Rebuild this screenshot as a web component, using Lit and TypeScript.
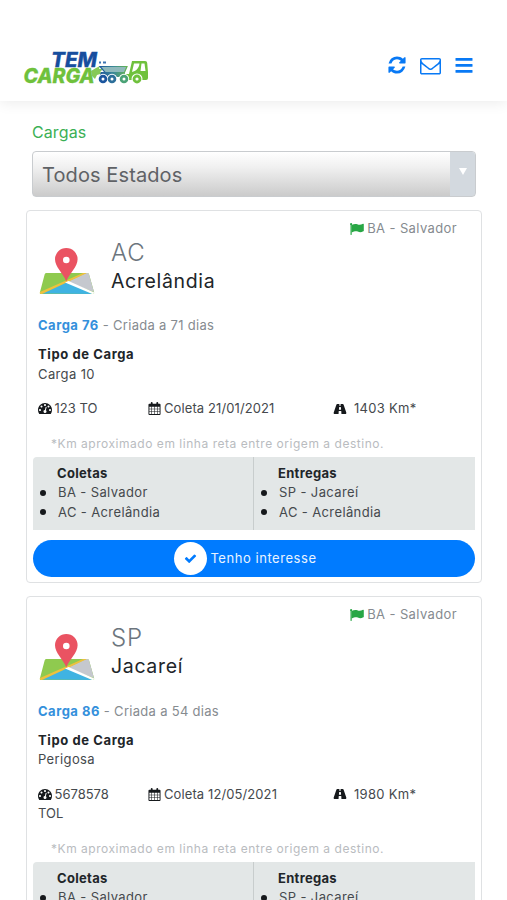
import { LitElement, html, css, svg } from "lit";
import { customElement, property } from "lit/decorators.js";

interface Carga {
  id: number;
  origem: string;
  uf: string;
  cidade: string;
  dias: number;
  tipo: string;
  peso: string;
  coleta: string;
  km: number;
  coletas: string[];
  entregas: string[];
}

const CARGAS: Carga[] = [
  {
    id: 76, origem: "BA - Salvador", uf: "AC", cidade: "Acrelândia", dias: 71,
    tipo: "Carga 10", peso: "123 TO", coleta: "21/01/2021", km: 1403,
    coletas: ["BA - Salvador", "AC - Acrelândia"],
    entregas: ["SP - Jacareí", "AC - Acrelândia"],
  },
  {
    id: 86, origem: "BA - Salvador", uf: "SP", cidade: "Jacareí", dias: 54,
    tipo: "Perigosa", peso: "5678578 TOL", coleta: "12/05/2021", km: 1980,
    coletas: ["BA - Salvador"],
    entregas: ["SP - Jacareí"],
  },
];

const shapes = {
  refresh: { box: "0 0 1536 1792", body: svg`<path d="M1511 1056q0 5-1 7-64 268-268 434.500t-478 166.500q-146 0-282.500-55t-243.500-157l-129 129q-19 19-45 19t-45-19-19-45v-448q0-26 19-45t45-19h448q26 0 45 19t19 45-19 45l-137 137q71 66 161 102t187 36q134 0 250-65t186-179q11-17 53-117 8-23 30-23h192q13 0 22.500 9.500t9.500 22.500zm25-800v448q0 26-19 45t-45 19h-448q-26 0-45-19t-19-45 19-45l138-138q-148-137-349-137-134 0-250 65t-186 179q-11 17-53 117-8 23-30 23h-199q-13 0-22.500-9.500t-9.500-22.500v-7q65-268 270-434.500t480-166.500q146 0 284 55.500t245 156.500l130-129q19-19 45-19t45 19 19 45z"/>` },
  envelope: { box: "0 0 1792 1792", body: svg`<path d="M1664 1504v-768q-32 36-69 66-268 206-426 338-51 43-83 67t-86.500 48.500-102.500 24.500h-2q-48 0-102.500-24.500t-86.500-48.500-83-67q-158-132-426-338-37-30-69-66v768q0 13 9.500 22.500t22.500 9.500h1472q13 0 22.500-9.500t9.500-22.500zm0-1051v-24.500l-.5-13-3-12.500-5.500-9-9-7.500-14-2.500h-1472q-13 0-22.500 9.500t-9.500 22.500q0 168 147 284 193 152 401 317 6 5 35 29.500t46 37.500 44.500 31.500 50.500 27.500 43 9h2q20 0 43-9t50.500-27.500 44.500-31.500 46-37.500 35-29.500q208-165 401-317 54-43 100.500-115.500t46.500-131.500zm128-37v1088q0 66-47 113t-113 47h-1472q-66 0-113-47t-47-113v-1088q0-66 47-113t113-47h1472q66 0 113 47t47 113z"/>` },
  bars: { box: "0 0 18 16", body: svg`<rect x=".5" y="0" width="17" height="2.800" rx=".6"/><rect x=".5" y="6" width="17" height="2.800" rx=".6"/><rect x=".5" y="12" width="17" height="2.800" rx=".6"/>` },
  check: { box: "0 0 1792 1792", body: svg`<path d="M1671 566q0 40-28 68l-724 724-136 136q-28 28-68 28t-68-28l-136-136-362-362q-28-28-28-68t28-68l136-136q28-28 68-28t68 28l294 295 656-657q28-28 68-28t68 28l136 136q28 28 28 68z"/>` },
  gauge: { box: "0 0 1792 1792", body: svg`<path d="M384 1152q0-53-37.500-90.500t-90.500-37.500-90.500 37.500-37.500 90.500 37.500 90.500 90.500 37.500 90.500-37.500 37.500-90.500zm192-448q0-53-37.500-90.500t-90.500-37.500-90.500 37.500-37.500 90.500 37.500 90.500 90.500 37.500 90.500-37.500 37.500-90.500zm428 481l101-382q6-26-7.500-48.500t-38.500-29.500-48 6.500-30 39.500l-101 382q-60 5-107 43.500t-63 98.500q-20 77 20 146t117 89 146-20 89-117q16-60-6-117t-72-91zm660-33q0-53-37.500-90.500t-90.500-37.500-90.500 37.500-37.500 90.500 37.500 90.500 90.500 37.500 90.500-37.500 37.500-90.500zm-640-640q0-53-37.500-90.500t-90.500-37.500-90.500 37.500-37.500 90.500 37.500 90.500 90.500 37.500 90.500-37.500 37.500-90.500zm448 192q0-53-37.500-90.500t-90.500-37.500-90.500 37.500-37.500 90.500 37.500 90.500 90.500 37.500 90.500-37.500 37.500-90.500zm320 448q0 261-141 483-19 29-54 29h-1402q-35 0-54-29-141-221-141-483 0-182 71-348t191-286 286-191 348-71 348 71 286 191 191 286 71 348z"/>` },
  calendar: { box: "0 0 13 14", body: svg`<path fill-rule="evenodd" d="M1 2h1.500V1a1 1 0 0 1 2 0v1h4V1a1 1 0 0 1 2 0v1H12a1 1 0 0 1 1 1v10a1 1 0 0 1-1 1H1a1 1 0 0 1-1-1V3a1 1 0 0 1 1-1zM1 5v2.200h2.200V5zm2.800 0v2.200h2.400V5zm3 0v2.200h2.400V5zm3 0v2.200H12V5zM1 7.900v2.300h2.200V7.900zm2.800 0v2.300h2.400V7.900zm3 0v2.300h2.400V7.900zm3 0v2.300H12V7.900zM1 10.900V13h2.200v-2.100zm2.800 0V13h2.400v-2.100zm3 0V13h2.400v-2.100zm3 0V13H12v-2.100z"/>` },
  road: { box: "0 0 14 11", body: svg`<path fill-rule="evenodd" d="M4 0h2.400l-.2 2h1.600l-.2-2H10c.4 0 .7.200.9.600l3 8.800c.2.900 0 1.600-.6 1.600H8.600l-.2-3.200H5.600L5.400 11H.7C.1 11-.1 10.300.1 9.400l3-8.800C3.300.2 3.600 0 4 0zm2.100 3.200-.3 3.200h2.400l-.3-3.200z"/>` },
  flag: { box: "0 0 14 12", body: svg`<path d="M1.200 0a1.100 1.100 0 0 1 .5 2V11.600a.4.400 0 0 1-.4.400h-.4a.4.400 0 0 1-.4-.4V2A1.100 1.100 0 0 1 1.200 0z"/><path d="M1.500 2C4 .8 5.600.6 7.300 1.300c1.900.9 3.700.6 5.700-.5.500-.2.800 0 .8.400v6.500c0 .3-.2.500-.5.600-2 1.100-3.600 1.200-5.500.3-1.700-.8-3.400-.4-6.300.8z"/>` },
};

const icon = (name: keyof typeof shapes) =>
  html`<svg class="icon ${name}" viewBox=${shapes[name].box} aria-hidden="true">${shapes[name].body}</svg>`;

@customElement("tem-logo")
class TemLogo extends LitElement {
  static styles = css`
    :host { display: block; width: 126px; height: 38px; }
    svg { display: block; overflow: visible; }
    .word { font: italic 800 20px Inter, sans-serif; }
    .blue { fill: #174e9e; stroke: #174e9e; stroke-width: 0.3; }
    .green { fill: #6fc13c; stroke: #6fc13c; stroke-width: 0.3; }
  `;
  render() {
    return html`<svg width="126" height="38" viewBox="0 0 126 38" role="img">
      <defs>
        <linearGradient id="fade" gradientUnits="userSpaceOnUse" x1="74" x2="108" y1="0" y2="0">
          <stop offset="0" stop-color="#174e9e" /><stop offset=".5" stop-color="#3e8b96" /><stop offset="1" stop-color="#6fc13c" />
        </linearGradient>
      </defs>
      <text class="word green" x="0.5" y="35.500" textLength="71" lengthAdjust="spacingAndGlyphs">CARGA</text>
      <text class="word blue" x="28" y="19.500" textLength="46" lengthAdjust="spacingAndGlyphs">TEM</text>
      <path d="M76 14.500h2v2h-2zM80 14.500h3v2h-3z" fill="#3c75b2" />
      <path d="M68 24l5-3 4-2-1 3 4 0-3 3 3 1-6 2-2 4-3-3z" fill="#85c957" />
      <path d="M77 19.500h27l-3 7H83z" fill="#8fb9bc" stroke="url(#fade)" stroke-width="1.200" />
      <path d="M78 25h24v5H76z" fill="url(#fade)" />
      <path fill-rule="evenodd" d="M109 14h13c1.500 0 2 .8 2.200 2L125 25v6a2 2 0 0 1-2 2h-21v-6h4zm2 2.500-2 8.500c4-1 7-3.500 7.500-8.500zm7.500 0-1 7.500h5l-1-7.500z" fill="#6fc13c" />
      <g fill="#fff"><circle cx="80" cy="32" r="5.200" /><circle cx="89" cy="32" r="5.200" /><circle cx="101" cy="32" r="5.200" /><circle cx="114" cy="32" r="5.500" /></g>
      <g fill="none" stroke-width="2.800">
        <circle cx="80" cy="32" r="2.900" stroke="#1b559e" /><circle cx="89" cy="32" r="2.900" stroke="#2d6f9a" />
        <circle cx="101" cy="32" r="2.900" stroke="#4ba276" /><circle cx="114" cy="32" r="3" stroke="#6fc13c" />
      </g>
    </svg>`;
  }
}

@customElement("carga-card")
class CargaCard extends LitElement {
  @property({ attribute: false }) carga!: Carga;

  static styles = css`
    :host {
      display: block; box-sizing: border-box; border: 1px solid #dfe1e3; border-radius: 4px;
      padding: 8px 6px 5px; background: #fff; color: #212529;
      font-size: 13px; line-height: 19.5px; letter-spacing: 0.25px;
    }
    .icon { fill: currentColor; flex: none; }
    .origin { display: flex; justify-content: flex-end; align-items: center; gap: 3px; height: 20px; padding-right: 18px; color: #868b90; letter-spacing: 0.38px; }
    .flag { width: 14px; height: 12px; color: #28a745; }
    .head { display: flex; height: 64px; padding-left: 6px; }
    .map { width: 56px; height: 48px; margin-top: 9px; }
    .place { margin: -0.5px 0 0 16px; }
    .uf { font-size: 24px; line-height: 28px; font-weight: 300; color: #6c757d; letter-spacing: 0.8px; }
    .city { font-size: 19.5px; line-height: 28px; letter-spacing: 0.65px; }
    .block { padding: 0 5px; }
    .created { margin-top: 13px; color: #868b90; letter-spacing: 0.3px; }
    .code { color: #3490dc; font-weight: 700; letter-spacing: 0.5px; }
    .kind { margin-top: 9.5px; }
    .strong { font-weight: 700; letter-spacing: 0.3px; }
    .kind .strong { letter-spacing: 0.6px; }
    .soft { color: #45494d; letter-spacing: 0.38px; }
    .facts { display: grid; grid-template-columns: 110px 185px 1fr; margin-top: 15px; padding-left: 5px; color: #45494d; letter-spacing: 0.1px; }
    .weight { width: 80px; letter-spacing: 0; }
    .facts .icon { vertical-align: -2px; color: #16191c; margin-right: 3px; }
    .facts .gauge { width: 14px; height: 14px; margin-right: 2.5px; }
    .calendar { width: 13px; height: 13px; }
    .facts .road { width: 14px; height: 10px; vertical-align: -0.5px; margin-right: 7px; }
    .distance { letter-spacing: 0.3px; }
    .note { margin-top: 15.5px; padding-left: 18px; font-size: 12px; color: #b9bcbf; white-space: nowrap; letter-spacing: 0.53px; }
    .stops { display: grid; grid-template-columns: 220px 1fr; height: 73px; margin-top: 3px; background: #e3e7e7; border-radius: 4px 0 0 0; }
    .stop { padding: 7px 0 0 24px; }
    .stop + .stop { border-left: 1px solid #c8cdcd; }
    .list { margin: 0; padding: 0; list-style: none; color: #45494d; }
    .item { display: flex; align-items: center; margin-left: -17px; gap: 12px; letter-spacing: 0.38px; }
    .item::before { content: ""; width: 6px; height: 6px; border-radius: 50%; background: #16191c; }
    .cta { display: flex; align-items: center; justify-content: center; gap: 3px; width: 100%; height: 37px; margin-top: 10px; padding: 0 17px 0 0; border: 0; border-radius: 19px; background: #007bff; color: #e8f3ff; font: inherit; letter-spacing: 0.55px; }
    .caption { padding-top: 1px; }
    .disc { display: grid; place-items: center; width: 33px; height: 33px; border-radius: 50%; background: #fff; color: #007bff; }
    .check { width: 13px; height: 13px; }
  `;

  stop(title: string, places: string[]) {
    return html`<div class="stop">
      <div class="strong">${title}</div>
      <ul class="list">${places.map((p) => html`<li class="item">${p}</li>`)}</ul>
    </div>`;
  }

  render() {
    const c = this.carga;
    return html`
      <div class="origin">${icon("flag")}<span>${c.origem}</span></div>
      <div class="head">
        <svg class="map" viewBox="0 0 56 48" aria-hidden="true">
          <path d="M7.500 25h40.500a2 2 0 0 1 2 1.300L55 44q.7 2-1.500 2H2.500Q.3 46 1 44l4.700-17.700A2 2 0 0 1 7.500 25z" fill="#8fca4f" />
          <path d="M28 34 47 25h1a2 2 0 0 1 2 1.300L55 44z" fill="#c5c8ce" />
          <path d="M28 34 3 45.500 53.500 46z" fill="#3fb3e2" />
          <path d="M1 44 44 25h4L3 46h-1Q0 45.500 1 44z" fill="#eec13d" />
          <path d="M26 34.500 29.500 33 55.300 44.500q0 1.500-2 1.500z" fill="#fff" />
          <path d="M27.300 33.500C24 25 16 19 16 11.300a11.300 11.300 0 0 1 22.600 0C38.600 19 30.600 25 27.300 33.500z" fill="#ea5362" />
          <circle cx="27.300" cy="12" r="3.300" fill="#fff" />
        </svg>
        <div class="place"><div class="uf">${c.uf}</div><div class="city">${c.cidade}</div></div>
      </div>
      <div class="block created"><span class="code">Carga ${c.id}</span> - Criada a ${c.dias} dias</div>
      <div class="block kind"><div class="strong">Tipo de Carga</div><div class="soft">${c.tipo}</div></div>
      <div class="facts">
        <div class="weight">${icon("gauge")}${c.peso}</div>
        <div>${icon("calendar")}Coleta ${c.coleta}</div>
        <div class="distance">${icon("road")}${c.km} Km*</div>
      </div>
      <div class="note">*Km aproximado em linha reta entre origem a destino.</div>
      <div class="stops">${this.stop("Coletas", c.coletas)}${this.stop("Entregas", c.entregas)}</div>
      <button class="cta"><span class="disc">${icon("check")}</span><span class="caption">Tenho interesse</span></button>
    `;
  }
}

@customElement("app-root")
class AppRoot extends LitElement {
  static styles = css`
    :host { display: block; height: 900px; overflow: hidden; background: #fff; font-family: Inter, "Open Sans", sans-serif; }
    .bar { display: flex; justify-content: space-between; box-sizing: border-box; height: 101px; padding: 47px 34px 0 23px; background: #fff; box-shadow: 0 1px 14px rgba(0, 0, 0, 0.09); }
    .tools { display: flex; align-items: center; height: 37px; color: #0879f5; }
    .icon { fill: currentColor; }
    .refresh { width: 18px; height: 20px; margin-top: -1px; }
    .envelope { width: 21px; height: 21px; margin: 0 14px; }
    .bars { width: 18px; height: 16px; }
    .page { padding: 0 25px 0 26px; }
    .label { padding: 19px 6px 0; font-size: 16px; line-height: 24px; color: #3bb054; letter-spacing: 0.1px; }
    .select { display: flex; justify-content: space-between; box-sizing: border-box; height: 46px; margin: 7px 6px 13px; border: 1px solid #c9cccf; border-radius: 4px; overflow: hidden; background: linear-gradient(#fff 0%, #f0f0f0 35%, #cbcbcb 100%); }
    .value { padding-left: 9px; font-size: 20px; line-height: 46px; color: #5f6266; letter-spacing: 0.1px; }
    .drop { display: grid; place-items: center; width: 25px; padding-bottom: 5px; background: #d3d9df; }
    .arrow { width: 0; border: solid transparent; border-width: 7px 4px 0; border-top-color: #fff; }
    .cards { display: flex; flex-direction: column; gap: 13px; }
  `;

  render() {
    return html`
      <header class="bar">
        <tem-logo></tem-logo>
        <nav class="tools">${icon("refresh")}${icon("envelope")}${icon("bars")}</nav>
      </header>
      <main class="page">
        <div class="label">Cargas</div>
        <div class="select"><span class="value">Todos Estados</span><span class="drop"><span class="arrow"></span></span></div>
        <div class="cards">${CARGAS.map((c) => html`<carga-card .carga=${c}></carga-card>`)}</div>
      </main>
    `;
  }
}
